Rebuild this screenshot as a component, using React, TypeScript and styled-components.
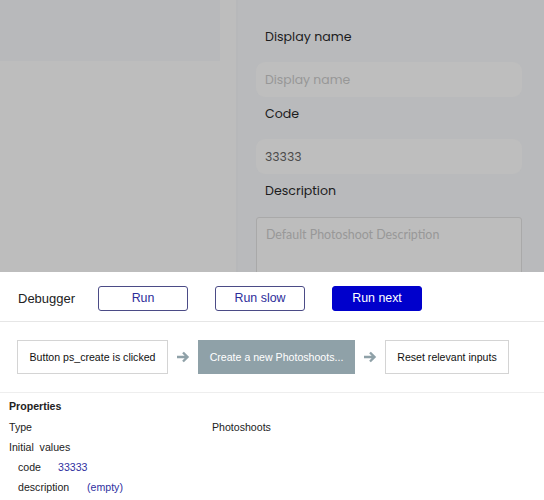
import React from 'react';
import styled, { createGlobalStyle } from 'styled-components';

const GlobalStyle = createGlobalStyle`
  html, body { margin: 0; padding: 0; background: #fff; }
  body { font-family: Arial, "Liberation Sans", sans-serif; }
  * { box-sizing: border-box; }
`;

const Page = styled.div`
  width: 544px;
  height: 500px;
  overflow: hidden;
  display: flex;
  flex-direction: column;
`;

const Backdrop = styled.div`
  height: 272px;
  flex: none;
  display: flex;
  background: #bdbdbd;
  overflow: hidden;
`;

const LeftPane = styled.div`
  width: 238px;
  flex: none;
  border-right: 2px solid #b7b8ba;
`;

const LeftCard = styled.div`
  width: 220px;
  height: 61px;
  background: #b8b9bb;
`;

const FormPane = styled.div`
  flex: 1;
  background: #b9babc;
  padding: 27px 22px 0 18px;
  display: flex;
  flex-direction: column;
  font-family: Poppins, "Open Sans", "Noto Sans", sans-serif;

  & > * {
    flex: none;
  }
`;

const Label = styled.div`
  font-size: 12.6px;
  color: #1c1c1d;
  padding-left: 9px;
  height: 22px;
  line-height: 20px;
  margin-bottom: 13px;
`;

const Field = styled.div<{ $muted?: boolean }>`
  height: 35px;
  border-radius: 9px;
  background: #bebebe;
  padding: 0 9px;
  display: flex;
  align-items: center;
  font-size: 12.4px;
  color: ${(p) => (p.$muted ? '#979797' : '#4c4c4c')};
  margin-bottom: 7px;
`;

const TextArea = styled.div`
  height: 70px;
  border: 1px solid #a9a9a9;
  border-radius: 3px;
  background: #bdbdbd;
  padding: 9px 9px;
  font-family: Lato, "Open Sans", sans-serif;
  font-size: 12.4px;
  color: #989898;
  margin-top: 1px;
`;

const Toolbar = styled.div`
  height: 50px;
  flex: none;
  display: flex;
  align-items: center;
  padding: 3px 0 0 18px;
  border-bottom: 1px solid #e6e6e6;
  font-size: 13px;
  color: #222;
`;

const ToolbarTitle = styled.div`
  width: 80px;
`;

const RunButton = styled.button<{ $primary?: boolean }>`
  width: 90px;
  height: 25px;
  margin-right: 27px;
  border-radius: 3px;
  border: 1px solid ${(p) => (p.$primary ? '#0000cc' : '#4b4b86')};
  background: ${(p) => (p.$primary ? '#0000cc' : '#fff')};
  color: ${(p) => (p.$primary ? '#fff' : '#2d2d9a')};
  font-family: Arial, "Liberation Sans", sans-serif;
  font-size: 12.4px;
  padding: 0;
  cursor: pointer;
`;

const Flow = styled.div`
  height: 71px;
  flex: none;
  display: flex;
  align-items: center;
  padding: 0 0 0 17px;
  border-bottom: 1px solid #eeeeee;
`;

const Step = styled.div<{ $active?: boolean; $width: number }>`
  width: ${(p) => p.$width}px;
  height: 34px;
  display: flex;
  align-items: center;
  justify-content: center;
  font-size: 10.6px;
  border: 1px solid ${(p) => (p.$active ? '#8fa1a8' : '#d4d4d4')};
  background: ${(p) => (p.$active ? '#8fa1a8' : '#fff')};
  color: ${(p) => (p.$active ? '#fff' : '#111')};
  white-space: nowrap;
`;

const Arrow = styled.div`
  width: 30px;
  display: flex;
  justify-content: center;
  align-items: center;
`;

const Props = styled.div`
  padding: 5px 9px 0;
  font-size: 10.6px;
  color: #222;
`;

const PropsTitle = styled.div`
  font-weight: bold;
  height: 19px;
  line-height: 16px;
`;

const Row = styled.div<{ $indent?: boolean }>`
  display: flex;
  height: 20px;
  align-items: center;
  padding-left: ${(p) => (p.$indent ? '9px' : '0')};
`;

const Key = styled.div<{ $width: number }>`
  width: ${(p) => p.$width}px;
`;

const Value = styled.div`
  color: #2f2fa0;
`;

const StepArrow = () => (
  <Arrow>
    <svg width="14" height="12" viewBox="0 0 14 12">
      <path d="M1 6h10M7 1.5L11.5 6 7 10.5" fill="none" stroke="#8fa1a8" strokeWidth="2.4" />
    </svg>
  </Arrow>
);

const App: React.FC = () => (
  <Page>
    <GlobalStyle />
    <Backdrop>
      <LeftPane>
        <LeftCard />
      </LeftPane>
      <FormPane>
        <Label>Display name</Label>
        <Field $muted>Display name</Field>
        <Label>Code</Label>
        <Field>33333</Field>
        <Label>Description</Label>
        <TextArea>Default Photoshoot Description</TextArea>
      </FormPane>
    </Backdrop>
    <Toolbar>
      <ToolbarTitle>Debugger</ToolbarTitle>
      <RunButton>Run</RunButton>
      <RunButton>Run slow</RunButton>
      <RunButton $primary>Run next</RunButton>
    </Toolbar>
    <Flow>
      <Step $width={151}>Button ps_create is clicked</Step>
      <StepArrow />
      <Step $width={157} $active>
        Create a new Photoshoots...
      </Step>
      <StepArrow />
      <Step $width={124}>Reset relevant inputs</Step>
    </Flow>
    <Props>
      <PropsTitle>Properties</PropsTitle>
      <Row>
        <Key $width={203}>Type</Key>
        <div>Photoshoots</div>
      </Row>
      <Row>Initial&nbsp; values</Row>
      <Row $indent>
        <Key $width={40}>code</Key>
        <Value>33333</Value>
      </Row>
      <Row $indent>
        <Key $width={69}>description</Key>
        <Value>(empty)</Value>
      </Row>
    </Props>
  </Page>
);

export default App;
